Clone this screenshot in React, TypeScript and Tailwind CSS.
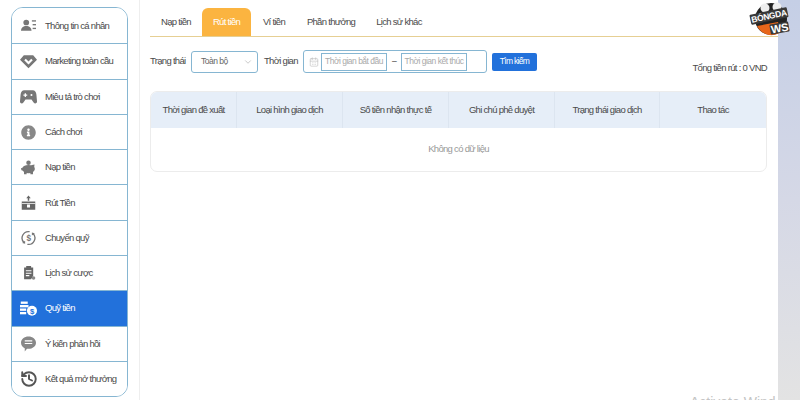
import { FaInfoCircle } from 'react-icons/fa';
import { CalendarDays, ChevronDown, History } from 'lucide-react';

function ProfileIcon() {
  return (
    <svg viewBox="0 0 20 20" className="h-[15px] w-[15px] fill-[#777]">
      <circle cx="7" cy="6" r="3.8" />
      <path d="M0 17c0-4 3-6.500 7-6.500s7 2.500 7 6.500z" />
      <rect x="14.500" y="3" width="5.500" height="1.800" />
      <rect x="15.500" y="8" width="4.500" height="1.800" />
      <rect x="15.500" y="13" width="4.500" height="1.800" />
    </svg>
  );
}

function DiamondIcon() {
  return (
    <svg viewBox="0 0 20 20" className="h-[17px] w-[17px] fill-[#777]">
      <path d="M4.500 2.500h11L20 8l-10 10L0 8zM5 8.500l5 5 5-5-1.800-1.800L10 10l-3.200-3.300z" fillRule="evenodd" />
    </svg>
  );
}

function GamepadIcon() {
  return (
    <svg viewBox="0 0 20 20" className="h-[18px] w-[17px] fill-[#777]">
      <path
        d="M5 2h10c2.500 0 4 2 4.300 5l.7 8c.2 2.500-2.500 3.500-4 1.500L13.500 13h-7L4 16.500C2.500 18.500-.2 17.500 0 15l.7-8C1 4 2.500 2 5 2zM4 7v1.500h1.500V10H7V8.500h1.500V7H7V5.500H5.500V7zM13.500 6.500a1.200 1.200 0 1 0 0 2.400 1.200 1.200 0 0 0 0-2.400z"
        fillRule="evenodd"
      />
    </svg>
  );
}

function PiggyIcon() {
  return (
    <svg viewBox="0 0 20 20" className="h-[17px] w-[15px] fill-[#777]">
      <circle cx="10" cy="3.500" r="3" />
      <ellipse cx="10" cy="12" rx="8.500" ry="5.500" />
      <path d="M13 7l5-1-.5 4zM4 15h3.500v4H4zM12.500 15H16v4h-3.500zM0 10.500l3 .5v3l-2.500-.5z" />
    </svg>
  );
}

function WithdrawIcon() {
  return (
    <svg viewBox="0 0 20 20" className="h-[18px] w-[15px] fill-[#666]">
      <path d="M10 0l3 3.500h-2V7H9V3.500H7z" />
      <path d="M1 8h18v11H1zM8 12v4h4v-4z" fillRule="evenodd" />
      <rect x="1" y="10" width="18" height="1" fill="#fff" />
    </svg>
  );
}

function TransferIcon() {
  return (
    <svg viewBox="0 0 20 20" className="h-[16px] w-[15px] fill-none stroke-[#777]">
      <path d="M11.500 1.600A8.500 8.500 0 0 0 4 16M8.500 18.400A8.500 8.500 0 0 0 16 4" strokeWidth="1.800" />
      <path d="M1.500 16.500L5.500 13.500V17.500zM18.500 3.500L14.500 6.500V2.500z" fill="#777" stroke="none" />
      <text x="10" y="14" textAnchor="middle" fontSize="11" fontWeight="700" fill="#777" stroke="none" fontFamily="Liberation Sans">$</text>
    </svg>
  );
}

function BetHistoryIcon() {
  return (
    <svg viewBox="0 0 20 20" className="h-[16px] w-[14px] fill-[#666]">
      <path d="M3 2h3V0h7v2h3v12l-3 5H3zM5.500 6v1.500h8V6zM5.500 9.500V11h8V9.500zM5.500 13v1.500h5V13z" fillRule="evenodd" />
      <circle cx="16.500" cy="17" r="2.500" fill="#888" />
    </svg>
  );
}

function FundIcon() {
  return (
    <svg viewBox="0 0 22 20" className="h-[17px] w-[17px] fill-white">
      <rect x="1" y="1" width="9" height="3" />
      <rect x="0" y="5.500" width="11" height="3" />
      <rect x="0" y="10" width="8" height="3" />
      <rect x="0" y="14.500" width="8" height="3" />
      <circle cx="15.500" cy="13" r="6.500" />
      <text x="15.500" y="16.500" textAnchor="middle" fontSize="10" fontWeight="700" fill="#2271db" fontFamily="Liberation Sans">$</text>
    </svg>
  );
}

function FeedbackIcon() {
  return (
    <svg viewBox="0 0 20 20" className="h-[16px] w-[15px] fill-[#888]">
      <path d="M10 0c5.500 0 10 3.600 10 8.200s-4.500 8.200-10 8.200h-2L5 20v-4.400C2 14.200 0 11.400 0 8.200 0 3.600 4.500 0 10 0zM5 5v1.500h10V5zM5 8.500V10h10V8.500z" fillRule="evenodd" />
    </svg>
  );
}

const menu = [
  { label: 'Thông tin cá nhân', icon: <ProfileIcon /> },
  { label: 'Marketing toàn cầu', icon: <DiamondIcon /> },
  { label: 'Miêu tả trò chơi', icon: <GamepadIcon /> },
  { label: 'Cách chơi', icon: <FaInfoCircle className="h-[15px] w-[15px] text-[#888]" /> },
  { label: 'Nạp tiền', icon: <PiggyIcon /> },
  { label: 'Rút Tiền', icon: <WithdrawIcon /> },
  { label: 'Chuyển quỹ', icon: <TransferIcon /> },
  { label: 'Lịch sử cược', icon: <BetHistoryIcon /> },
  { label: 'Quỹ tiền', icon: <FundIcon />, active: true },
  { label: 'Ý kiến phản hồi', icon: <FeedbackIcon /> },
  { label: 'Kết quả mở thưởng', icon: <History className="h-[18px] w-[18px] text-[#555]" strokeWidth={2.6} /> },
];

const tabs = [
  { label: 'Nạp tiền', width: 'w-[52px]' },
  { label: 'Rút tiền', width: 'w-[49px] bg-[#fbb440] text-white' },
  { label: 'Ví tiền', width: 'w-[46px]' },
  { label: 'Phần thưởng', width: 'w-[68px]' },
  { label: 'Lịch sử khác', width: 'w-[68px]' },
];

const columns = [
  { label: 'Thời gian đề xuất', width: 'w-[86px]' },
  { label: 'Loại hình giao dịch', width: 'w-[106px]' },
  { label: 'Số tiền nhận thực tế', width: 'w-[106px]' },
  { label: 'Ghi chú phê duyệt', width: 'w-[106px]' },
  { label: 'Trạng thái giao dịch', width: 'w-[105px]' },
  { label: 'Thao tác', width: 'flex-1' },
];

export default function App() {
  return (
    <div className="relative flex h-[400px] w-[800px] overflow-hidden whitespace-nowrap bg-white font-['Liberation_Sans',sans-serif] text-[9.5px] tracking-[-0.7px] text-[#4a4a4a]">
      {/* Sidebar */}
      <div className="h-full w-[140px] shrink-0 border-r border-[#eee] pl-[11px] pt-[7px]">
        <div className="w-[117px] overflow-hidden rounded-[12px] border border-[#86b6d2]">
          {menu.map((item, i) => (
            <div
              key={item.label}
              className={`flex h-[35.3px] items-center ${i > 0 ? 'border-t border-[#86b6d2]' : ''} ${item.active ? 'bg-[#2271db] text-white' : 'bg-white'}`}
            >
              <div className="flex w-[33px] justify-center">{item.icon}</div>
              <span>{item.label}</span>
            </div>
          ))}
        </div>
      </div>

      {/* Main panel */}
      <div className="w-[638px] shrink-0 pl-[10px] pt-2">
        <div className="flex h-[29px] items-stretch border-b border-[#e6cf93]">
          {tabs.map((tab) => (
            <div key={tab.label} className={`flex items-center justify-center rounded-t-[6px] ${tab.width}`}>
              {tab.label}
            </div>
          ))}
        </div>

        {/* Filters */}
        <div className="mr-[11px] mt-[13px] flex h-[23px] items-center">
          <span className="w-[41px]">Trạng thái</span>
          <div className="flex h-[22px] w-[67px] items-center justify-between rounded-[3px] border border-[#86b6d2] pl-[9px] pr-[4px] text-[8.5px] tracking-[-0.5px] text-[#666]">
            Toàn bộ
            <ChevronDown className="h-[10px] w-[10px] text-[#aaa]" strokeWidth={1.5} />
          </div>
          <span className="ml-[6px] w-[39px]">Thời gian</span>
          <div className="flex h-[23px] w-[184px] items-center rounded-[3px] border border-[#86b6d2] pl-[5px] text-[8.5px] tracking-[-0.5px] text-[#aaa]">
            <CalendarDays className="mr-[2px] h-[10px] w-[10px] text-[#bbb]" strokeWidth={1.5} />
            <div className="flex h-[18px] w-[66px] items-center justify-center border border-[#86b6d2]">Thời gian bắt đầu</div>
            <span className="mx-[4px] w-[6px] text-center text-[#444]">–</span>
            <div className="flex h-[18px] w-[66px] items-center justify-center border border-[#86b6d2]">Thời gian kết thúc</div>
          </div>
          <div className="ml-[5px] flex h-[18px] w-[45px] items-center justify-center rounded-[2px] bg-[#2271db] text-[8.5px] tracking-[-0.7px] text-white">Tìm kiếm</div>
          <span className="mb-[-1px] ml-auto self-end leading-[12px]">Tổng tiền rút : 0 VND</span>
        </div>

        {/* Table */}
        <div className="mr-[11px] mt-[18px] overflow-hidden rounded-[7px] border border-[#ececec]">
          <div className="flex h-[36px] bg-[#e6eef8]">
            {columns.map((col, i) => (
              <div
                key={col.label}
                className={`flex items-center justify-center ${col.width} ${i < 5 ? 'border-r border-[#dce5f0]' : ''}`}
              >
                {col.label}
              </div>
            ))}
          </div>
          <div className="flex h-[43px] items-center justify-center text-[#999]">Không có dữ liệu</div>
        </div>
      </div>

      {/* Page background peeking out on the right */}
      <div className="flex-1 bg-gradient-to-b from-[#c5cfe6] via-[#d5d8e6] to-[#e3e3e3]" />

      {/* Logo */}
      <div className="absolute left-[750px] top-0 h-[38px] w-[42px] tracking-normal">
        <svg viewBox="0 0 42 38" className="absolute inset-0 h-full w-full">
          <circle cx="21" cy="19" r="16" fill="#222" />
          <circle cx="15" cy="8" r="4.500" fill="#eee" />
          <circle cx="27" cy="7" r="4.500" fill="#eee" />
          <path d="M7 26a16 16 0 0 0 24 6l-3-10z" fill="#e8661a" />
        </svg>
        <div className="absolute left-0 top-[11px] -rotate-[12deg] rounded-[1px] bg-[#3a3a3a] px-[1px] text-[8.5px] font-bold leading-[10px] tracking-[-0.3px] text-white">BÓNGDA</div>
        <div className="absolute left-[20px] top-[23px] -rotate-[10deg] rounded-[1px] bg-[#3a3a3a] px-[1px] text-[11px] font-bold leading-[10px] tracking-[-0.3px] text-white">WS</div>
      </div>

      {/* Activate Windows watermark, cut off by the window */}
      <div className="absolute left-[690px] top-[392px] text-[14px] tracking-normal text-[#c4c4c4]">Activate Wind</div>
    </div>
  );
}
